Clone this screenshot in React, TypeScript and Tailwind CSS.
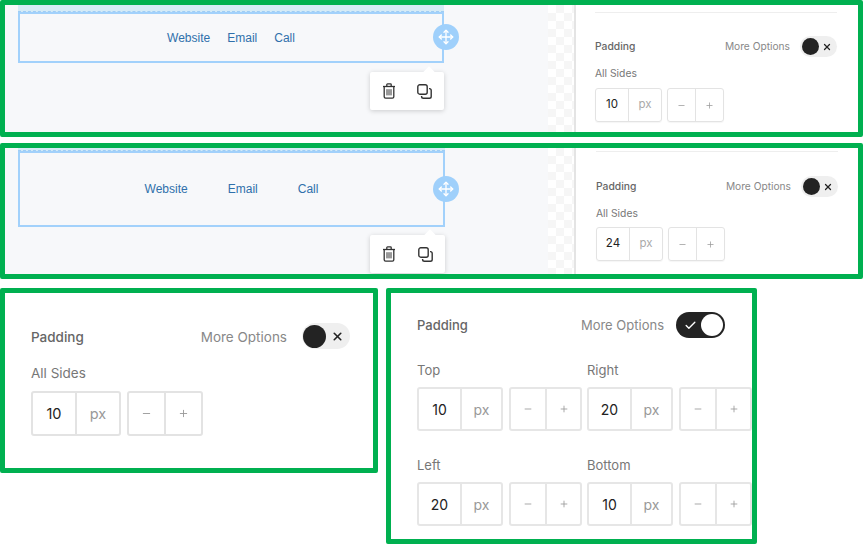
import React from 'react';
import { Move, X, Check, Minus, Plus } from 'lucide-react';

const TrashIcon = () => (
  <svg width="14" height="16" viewBox="0 0 14 16" fill="none" stroke="#333" strokeWidth="1.3">
    <path d="M1 3.5h12" />
    <path d="M4.8 3.2V1.6c0-.4.3-.7.7-.7h3c.4 0 .7.3.7.7v1.6" />
    <path d="M2.2 3.5v10.2c0 .8.6 1.4 1.4 1.4h6.8c.8 0 1.4-.6 1.4-1.4V3.5" />
    <path d="M5 6.2v6.2M7 6.2v6.2M9 6.2v6.2" strokeWidth="1" />
  </svg>
);

const CopyIcon = () => (
  <svg width="15" height="15" viewBox="0 0 15 15" fill="none" stroke="#333" strokeWidth="1.4">
    <rect x="0.8" y="0.8" width="9.4" height="9.4" rx="2" />
    <path d="M12 4.6h.4c1 0 1.8.8 1.8 1.8v6c0 1-.8 1.8-1.8 1.8h-6c-1 0-1.8-.8-1.8-1.8V12" />
  </svg>
);

const ToggleOff = ({ large }: { large?: boolean }) => (
  <div className={large ? 'w-[48px] h-[26px] rounded-full bg-[#efefef] flex items-center pl-[1px]' : 'w-[37px] h-[21px] rounded-full bg-[#efefef] flex items-center pl-[2px]'}>
    <div className={large ? 'w-[23px] h-[23px] rounded-full bg-[#232323]' : 'w-[17px] h-[17px] rounded-full bg-[#232323]'} />
    <X className={large ? 'ml-[5px]' : 'ml-[3px]'} size={large ? 13 : 10} strokeWidth={3} color="#222" />
  </div>
);

const ToggleOn = () => (
  <div className="w-[49px] h-[26px] rounded-full bg-[#232323] flex items-center justify-between pl-[8px] pr-[2px]">
    <Check size={13} strokeWidth={2.5} color="#fff" />
    <div className="w-[22px] h-[22px] rounded-full bg-white" />
  </div>
);

const SmallFields = ({ value }: { value: string }) => (
  <div className="flex gap-[5px] h-[34px]">
    <div className="w-[67px] flex border border-[#e3e3e3] rounded-[3px] shadow-[0_1px_1px_rgba(0,0,0,0.04)]">
      <div className="w-[33px] border-r border-[#e3e3e3] flex items-center justify-center text-[11.5px] text-[#222]">{value}</div>
      <div className="flex-1 flex items-center justify-center text-[11.5px] text-[#aaa]">px</div>
    </div>
    <div className="w-[57px] flex border border-[#e3e3e3] rounded-[3px] shadow-[0_1px_1px_rgba(0,0,0,0.04)]">
      <div className="w-[28px] border-r border-[#e3e3e3] flex items-center justify-center text-[#999]"><Minus size={9} /></div>
      <div className="flex-1 flex items-center justify-center text-[#999]"><Plus size={9} /></div>
    </div>
  </div>
);

const LargeFields = ({ value }: { value: string }) => (
  <div className="flex gap-[6px] h-[45px]">
    <div className="w-[90px] flex border-2 border-[#e3e3e3] rounded-[3px]">
      <div className="w-[44px] border-r-2 border-[#e3e3e3] flex items-center justify-center text-[14.5px] text-[#222]">{value}</div>
      <div className="flex-1 flex items-center justify-center text-[14.5px] text-[#999]">px</div>
    </div>
    <div className="w-[76px] flex border-2 border-[#e3e3e3] rounded-[3px]">
      <div className="w-[37px] border-r-2 border-[#e3e3e3] flex items-center justify-center text-[#999]"><Minus size={11} /></div>
      <div className="flex-1 flex items-center justify-center text-[#999]"><Plus size={11} /></div>
    </div>
  </div>
);

const SideField = ({ label, value }: { label: string; value: string }) => (
  <div>
    <div className="h-[18px] leading-[18px] text-[13px] text-[#777]">{label}</div>
    <div className="mt-[8px] flex gap-[6px] h-[44px]">
      <div className="w-[86px] shrink-0 flex border-2 border-[#e6e6e6] rounded-[3px]">
        <div className="w-[43px] border-r-2 border-[#e6e6e6] flex items-center justify-center text-[14px] text-[#222]">{value}</div>
        <div className="flex-1 flex items-center justify-center text-[14px] text-[#999]">px</div>
      </div>
      <div className="w-[73px] shrink-0 flex border-2 border-[#e6e6e6] rounded-[3px]">
        <div className="w-[36px] border-r-2 border-[#e6e6e6] flex items-center justify-center text-[#999]"><Minus size={10} /></div>
        <div className="flex-1 flex items-center justify-center text-[#999]"><Plus size={10} /></div>
      </div>
    </div>
  </div>
);

const Popup = ({ className }: { className: string }) => (
  <div className={className}>
    <div className="absolute -top-[4px] right-[11px] w-[8px] h-[8px] rotate-45 bg-white" />
    <TrashIcon />
    <CopyIcon />
  </div>
);

export default function App() {
  return (
    <div className="w-[865px] h-[545px] bg-white overflow-hidden font-['Inter',sans-serif]">
      {/* top row */}
      <div className="w-[863px] h-[137px] border-[5px] border-[#00b050] rounded-[2px] flex overflow-hidden">
        <div className="w-[543px] shrink-0 bg-[#f7f8fa] pl-[13px]">
          <div className="w-[426px] h-[7px] bg-[#d5ebf6] border-b border-dashed border-[#9fcdf5]" />
          <div className="relative w-[426px] h-[51px] border-2 border-[#a2d1fb] flex items-center justify-center gap-[17px] text-[12px] text-[#2f70ab] font-['Liberation_Sans',sans-serif]">
            <span>Website</span>
            <span>Email</span>
            <span>Call</span>
            <div className="absolute -right-[17px] top-[10px] w-[26px] h-[26px] rounded-full bg-[#9fd0fb] flex items-center justify-center">
              <Move size={16} color="#fff" strokeWidth={2} />
            </div>
            <Popup className="absolute -right-[2px] top-[58px] w-[74px] h-[38px] bg-white rounded-[2px] shadow-[0_1px_5px_rgba(0,0,0,0.18)] flex items-center justify-between pl-[12px] pr-[12px]" />
          </div>
        </div>
        <div className="w-[28px] shrink-0 bg-[repeating-conic-gradient(#f6f6f6_0%_25%,#fff_0%_50%)] bg-[length:16px_16px] border-r-2 border-[#e4e4e4]" />
        <div className="pl-[19px] pt-[7px] w-[261px]">
          <div className="h-px bg-[#eee]" />
          <div className="mt-[23px] h-[21px] flex items-center justify-between">
            <span className="text-[10.3px] font-medium text-[#666]">Padding</span>
            <div className="flex items-center gap-[10px]">
              <span className="text-[10.2px] text-[#888]">More Options</span>
              <ToggleOff />
            </div>
          </div>
          <div className="mt-[8px] h-[16px] leading-[16px] text-[10.3px] text-[#777]">All Sides</div>
          <div className="mt-[7px]"><SmallFields value="10" /></div>
        </div>
      </div>

      {/* second row */}
      <div className="mt-[6px] w-[863px] h-[136px] border-[5px] border-[#00b050] rounded-[2px] flex overflow-hidden">
        <div className="w-[543px] shrink-0 bg-[#f7f8fa] pl-[13px]">
          <div className="w-[427px] h-[3px] bg-[#d5ebf6] border-b border-dashed border-[#9fcdf5]" />
          <div className="relative w-[427px] h-[76px] border-2 border-[#a2d1fb] flex items-center justify-center gap-[40px] text-[12px] text-[#2f70ab] font-['Liberation_Sans',sans-serif]">
            <span>Website</span>
            <span>Email</span>
            <span>Call</span>
            <div className="absolute -right-[16px] top-[23px] w-[26px] h-[26px] rounded-full bg-[#9fd0fb] flex items-center justify-center">
              <Move size={16} color="#fff" strokeWidth={2} />
            </div>
            <Popup className="absolute -right-[2px] top-[82px] w-[75px] h-[38px] bg-white rounded-[2px] shadow-[0_1px_5px_rgba(0,0,0,0.18)] flex items-center justify-between pl-[12px] pr-[12px]" />
          </div>
        </div>
        <div className="w-[28px] shrink-0 bg-[repeating-conic-gradient(#f6f6f6_0%_25%,#fff_0%_50%)] bg-[length:16px_16px] border-r-2 border-[#e4e4e4]" />
        <div className="pl-[20px] pt-[3px] w-[262px]">
          <div className="h-px bg-[#eee]" />
          <div className="mt-[24px] h-[21px] flex items-center justify-between">
            <span className="text-[10.3px] font-medium text-[#666]">Padding</span>
            <div className="flex items-center gap-[10px]">
              <span className="text-[10.2px] text-[#888]">More Options</span>
              <ToggleOff />
            </div>
          </div>
          <div className="mt-[8px] h-[16px] leading-[16px] text-[10.3px] text-[#777]">All Sides</div>
          <div className="mt-[6px]"><SmallFields value="24" /></div>
        </div>
      </div>

      {/* bottom row */}
      <div className="mt-[9px] flex gap-[8px]">
        <div className="w-[378px] h-[185px] border-[5px] border-[#00b050] rounded-[2px] pl-[26px] pr-[23px] pt-[30px]">
          <div className="h-[26px] flex items-center justify-between">
            <span className="pt-[2px] text-[13.5px] font-medium text-[#666]">Padding</span>
            <div className="flex items-center gap-[15px]">
              <span className="pt-[2px] text-[13.5px] text-[#888]">More Options</span>
              <ToggleOff large />
            </div>
          </div>
          <div className="mt-[15px] h-[18px] leading-[18px] text-[13.5px] text-[#777]">All Sides</div>
          <div className="mt-[9px]"><LargeFields value="10" /></div>
        </div>
        <div className="w-[371px] h-[256px] border-[5px] border-[#00b050] rounded-[2px] overflow-hidden pl-[26px] pt-[19px]">
          <div className="w-[308px] h-[26px] flex items-center justify-between">
            <span className="pt-[2px] text-[13px] font-medium text-[#666]">Padding</span>
            <div className="flex items-center gap-[12px]">
              <span className="pt-[2px] text-[13px] text-[#888]">More Options</span>
              <ToggleOn />
            </div>
          </div>
          <div className="mt-[23px] flex gap-[5px]">
            <SideField label="Top" value="10" />
            <SideField label="Right" value="20" />
          </div>
          <div className="mt-[25px] flex gap-[5px]">
            <SideField label="Left" value="20" />
            <SideField label="Bottom" value="10" />
          </div>
        </div>
      </div>
    </div>
  );
}
